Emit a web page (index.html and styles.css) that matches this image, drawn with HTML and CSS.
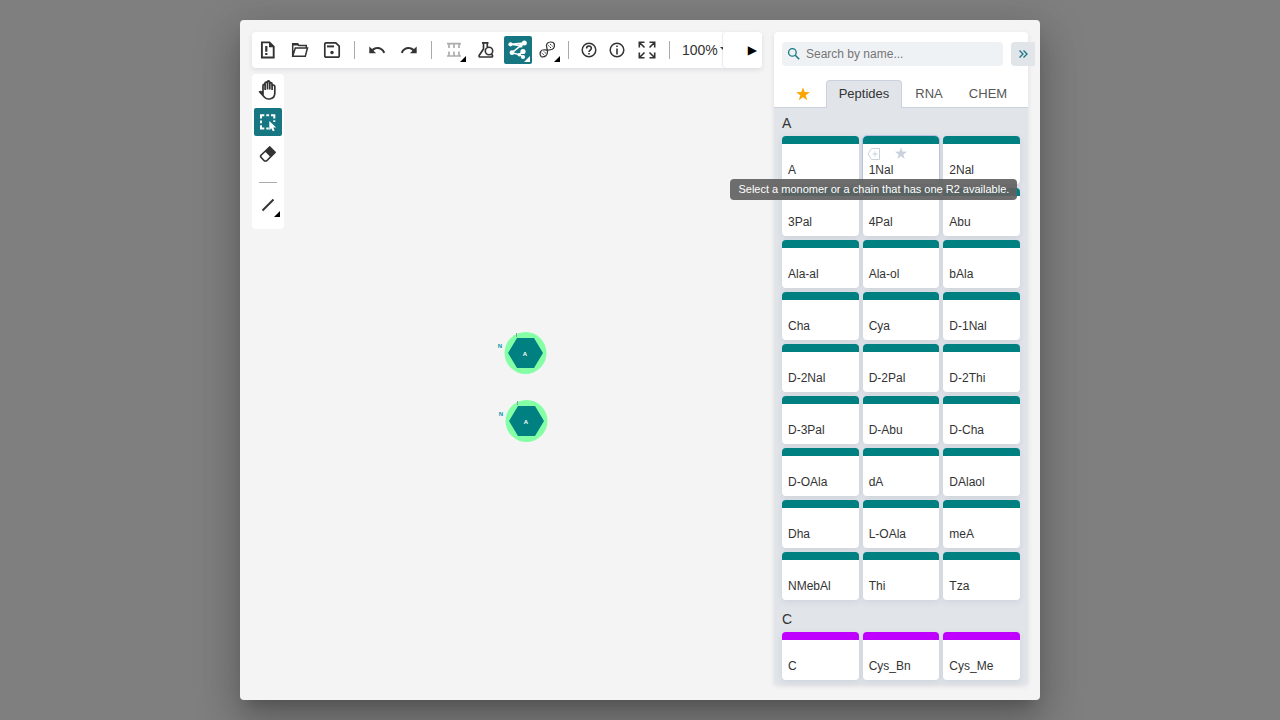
FILE: index.html
```html
<!DOCTYPE html>
<html lang="en">
<head>
<meta charset="utf-8">
<title>Macromolecules editor</title>
<link rel="stylesheet" href="styles.css">
</head>
<body>
<main class="dialog">
  <section class="editor">
    <div class="topbar">
      <div class="topbar-tools">
        <div class="group">
          <button class="tool" aria-label="Clear canvas"><svg viewBox="0 0 20 20"><path d="M3.9 2.400h7.600l4.200 4.200v10.900H3.900z" fill="none" stroke="currentColor" stroke-width="1.900"/><path d="M11 2v5.300h5.200zM7.200 6h2.200v5.800H7.200zM7.200 13h2.200v2.100H7.200z" fill="currentColor"/></svg></button>
          <button class="tool" aria-label="Open"><svg viewBox="0 0 20 20"><path d="M2.7 16V3.700h4.800L9 5.500h7.300v2.300M2.700 16.300 5.300 8h12.200l-2.200 8.300z" fill="none" stroke="currentColor" stroke-width="1.500"/><path d="M2 3h5.800l1.500 2.500H2z" fill="currentColor"/></svg></button>
          <button class="tool" aria-label="Save"><svg viewBox="0 0 20 20"><path d="M4 2.800h9.800l3.400 3.400V16a1.200 1.200 0 0 1-1.200 1.200H4A1.200 1.200 0 0 1 2.800 16V4A1.200 1.200 0 0 1 4 2.800z" fill="none" stroke="currentColor" stroke-width="1.700"/><path d="M5 5.400h7v2H5z" fill="currentColor"/><circle cx="10" cy="12.500" r="1.700" fill="currentColor"/></svg></button>
        </div>
        <span class="divider"></span>
        <div class="group">
          <button class="tool" aria-label="Undo"><svg viewBox="0 0 20 20"><path d="M2.300 6.500v6.800h6.800l-2.600-2.600c2.500-2.500 8-2.300 9.800 2.600l1.900-.7C16 6.500 9 5.500 5 9.100z" fill="currentColor"/></svg></button>
          <button class="tool" aria-label="Redo"><svg viewBox="0 0 20 20"><path d="M17.700 6.500v6.800h-6.800l2.600-2.600c-2.500-2.500-8-2.300-9.800 2.600l-1.900-.7C4 6.500 11 5.500 15 9.100z" fill="currentColor"/></svg></button>
        </div>
        <span class="divider"></span>
        <div class="group">
          <button class="tool disabled" aria-label="Create antisense strand" disabled><svg viewBox="0 0 20 20"><path d="M3 3.600h14M5 3.600v4.400M10 3.600v4.400M15 3.600v4.400M3 16h14M5 16v-4.400M10 16v-4.400M15 16v-4.400" fill="none" stroke="currentColor" stroke-width="1.700"/></svg><span class="corner"></span></button>
          <button class="tool" aria-label="Calculate properties"><svg viewBox="0 0 20 20"><path d="M6 2.800h6.500M7.500 3v6L3.300 15.200q-.8 1.800 1 1.800h11q1.800 0 1-1.800l-1-1.500M11.300 3v4" fill="none" stroke="currentColor" stroke-width="1.700"/><circle cx="13" cy="11" r="3.700" fill="#fff" stroke="currentColor" stroke-width="1.600"/></svg></button>
          <button class="tool active" aria-label="Flex layout mode"><svg viewBox="0 0 20 20"><path d="M2.500 4.300 16.300 3l-3.600 2.700zM12.700 5.700 4 12.700l7.300 2 3.700-3M11.300 14.700l4 2.300" fill="none" stroke="currentColor" stroke-width="1.500"/><circle cx="2.500" cy="4.300" r="2.100" fill="currentColor"/><circle cx="16.300" cy="3" r="2.500" fill="currentColor"/><circle cx="12.700" cy="5.700" r="1.900" fill="currentColor"/><circle cx="4" cy="12.700" r="2.400" fill="currentColor"/><circle cx="15" cy="11.500" r="2.600" fill="currentColor"/><circle cx="11.300" cy="14.700" r="1.700" fill="currentColor"/><circle cx="15" cy="17" r="2.100" fill="currentColor"/></svg><span class="corner"></span></button>
        </div>
        <button class="tool mode" aria-label="Switch to sequence"><svg viewBox="0 0 20 20"><path d="M3.200 16.800C.5 12.500 3 9.300 7 9.800c4.500.6 8 .7 9.200-2.700.6-2 0-3.800-1-4.600" fill="none" stroke="currentColor" stroke-width="1.200"/><path d="M3.200 16.800c4 .8 6.500-1.800 6.300-5.600C9 7 7.300 5 9.300 3.200c1.700-1.500 4.700-1.300 5.900-.7" fill="none" stroke="currentColor" stroke-width="1.200"/><path d="m3.600 12.800 3 2.700M5.500 11.200l2.800 2.500M10.300 5.500l3 2.700M12 4l2.600 2.300" stroke="currentColor" stroke-width="1" stroke-dasharray="1.500 .7"/></svg><span class="corner"></span></button>
        <span class="divider tight"></span>
        <div class="help">
          <button class="tool" aria-label="Help"><svg viewBox="0 0 20 20"><circle cx="10" cy="10" r="6.800" fill="none" stroke="currentColor" stroke-width="1.500"/><path d="M7.600 8.500C7.600 5.300 12.400 5.300 12.400 8.300c0 1.700-2.400 1.800-2.400 3.600M10 13v1.500" fill="none" stroke="currentColor" stroke-width="1.600"/></svg></button>
          <button class="tool" aria-label="About"><svg viewBox="0 0 20 20"><circle cx="10" cy="10" r="6.800" fill="none" stroke="currentColor" stroke-width="1.500"/><path d="M10 5.500V7M10 8.500v6" stroke="currentColor" stroke-width="1.600"/></svg></button>
        </div>
        <button class="tool mode" aria-label="Fullscreen"><svg viewBox="0 0 20 20"><path d="M2.300 7.500V2.300h5.200M12.500 2.300h5.200v5.200M17.700 12.500v5.200h-5.200M7.500 17.700H2.300v-5.200M2.500 2.500l5 5M17.500 2.500l-5 5M17.500 17.500l-5-5M2.500 17.500l5-5" fill="none" stroke="currentColor" stroke-width="1.600"/></svg></button>
        <span class="divider"></span>
        <button class="zoom">100%<span class="zoom-arrow"></span></button>
      </div>
      <button class="scroll-right" aria-label="Scroll right">▶</button>
    </div>
    <div class="workspace">
      <div class="sidebar">
        <button class="tool" aria-label="Hand"><svg viewBox="0 0 20 20"><path d="M1.700 11.800c1-.9 2 .1 3.300 1.500V5.500c0-1.500 2-1.500 2 0V3.300c0-1.500 2.300-1.500 2.300 0V2c0-1.400 2.300-1.400 2.300 0v1.800c0-1.500 2.400-1.500 2.400 0v2c.3-1.200 2.800-1 2.800.5V13c0 7-7.800 7-10.300 4.200z" fill="none" stroke="currentColor" stroke-width="1.700"/><path d="M7.100 4v6M9.500 2v7.500M11.800 2.500v7M14.100 5v5" stroke="currentColor" stroke-width="1.700"/></svg></button>
        <button class="tool active" aria-label="Select rectangle"><svg viewBox="0 0 20 20"><path d="M3 6.500V3.200h3.300M8.300 3.200h2.800M13 3.200h3.300v3.300M3 8.500v2.800M3 13.200v3.300h3.300M8.300 16.500h2.500M16.300 8.300V10" fill="none" stroke="currentColor" stroke-width="2"/><path d="M11.300 9v9.200l2-1.900 1.500 3 1.900-.9-1.400-2.900h2.800z" fill="currentColor"/></svg></button>
        <button class="tool" aria-label="Erase"><svg viewBox="0 0 20 20"><path d="M11.700 3 17 8.300 8.500 17h-2L2.700 13v-1.500z" fill="none" stroke="currentColor" stroke-width="1.700" stroke-linejoin="round"/><path d="m11.700 2.300 6 6-5 5-6-6z" fill="currentColor"/></svg></button>
        <hr class="rule">
        <button class="tool" aria-label="Single bond"><svg viewBox="0 0 20 20"><path d="M4.500 15.500 15.500 4.500" stroke="currentColor" stroke-width="1.900"/></svg><span class="corner"></span></button>
      </div>
      <svg class="canvas" viewBox="284 74 478 610" role="img" aria-label="Canvas">
        <circle cx="525.500" cy="353" r="21" fill="#85ffa5"/>
        <path d="M508 353l9-15h17l9 15-9 15h-17z" fill="#008080"/>
        <path d="M516.500 333v4M517.500 401v4" stroke="#84a49c"/>
        <text class="letter" x="525" y="356">A</text><text class="terminal" x="500" y="348">N</text>
        <circle cx="526.500" cy="421" r="21" fill="#85ffa5"/>
        <path d="M509 421l9-15h17l9 15-9 15h-17z" fill="#008080"/>
        <path d="M516.500 333v4M517.500 401v4" stroke="#84a49c"/>
        <text class="letter" x="526" y="424">A</text><text class="terminal" x="501" y="416">N</text>
      </svg>
    </div>
  </section>
  <aside class="library">
    <div class="search-row">
      <label class="search"><svg viewBox="0 0 16 16"><circle cx="6.400" cy="6.400" r="3.800" fill="none" stroke="currentColor" stroke-width="1.300"/><path d="m9.200 9.200 4 4" stroke="currentColor" stroke-width="1.500"/></svg><input type="text" placeholder="Search by name..." aria-label="Search by name"></label>
      <button class="hide" aria-label="Hide library"><svg viewBox="0 0 16 16"><path d="m4.500 4.500 3.500 3.500-3.500 3.500M8.500 4.500 12 8l-3.500 3.500" fill="none" stroke="currentColor" stroke-width="1.300"/></svg></button>
    </div>
    <div class="tabs" role="tablist">
      <button class="tab fav" role="tab" aria-label="Favorites"><svg viewBox="0 0 16 16"><path d="m8 1.200 1.700 4.900 5.200.1-4.200 3.100 1.500 5L8 11.300l-4.200 3 1.500-5L1.100 6.200l5.200-.1z" fill="#faa500"/></svg></button>
      <button class="tab selected" role="tab" aria-selected="true">Peptides</button>
      <button class="tab rna" role="tab">RNA</button>
      <button class="tab chem" role="tab">CHEM</button>
    </div>
    <div class="list">
      <section><h2>A</h2><div class="cards">
        <div class="card">A</div>
        <div class="card hovered"><span class="card-actions"><svg viewBox="0 0 14 14"><path d="M4.500 1.500h8v11h-8L1 7z" fill="none" stroke="currentColor"/><path d="M8 4.500v5M5.500 7h5" stroke="currentColor"/></svg><svg viewBox="0 0 14 14"><path d="m7 .3 1.500 4.300 4.600.1-3.700 2.800 1.300 4.400L7 9.300l-3.700 2.600 1.300-4.400L.9 4.700l4.600-.1z" fill="currentColor"/></svg></span>1Nal<span class="tooltip" role="tooltip">Select a monomer or a chain that has one R2 available.</span></div>
        <div class="card">2Nal</div>
        <div class="card">3Pal</div><div class="card">4Pal</div><div class="card">Abu</div>
        <div class="card">Ala-al</div><div class="card">Ala-ol</div><div class="card">bAla</div>
        <div class="card">Cha</div><div class="card">Cya</div><div class="card">D-1Nal</div>
        <div class="card">D-2Nal</div><div class="card">D-2Pal</div><div class="card">D-2Thi</div>
        <div class="card">D-3Pal</div><div class="card">D-Abu</div><div class="card">D-Cha</div>
        <div class="card">D-OAla</div><div class="card">dA</div><div class="card">DAlaol</div>
        <div class="card">Dha</div><div class="card">L-OAla</div><div class="card">meA</div>
        <div class="card">NMebAl</div><div class="card">Thi</div><div class="card">Tza</div>
      </div></section>
      <section><h2>C</h2><div class="cards cysteine">
        <div class="card">C</div><div class="card">Cys_Bn</div><div class="card">Cys_Me</div>
      </div></section>
    </div>
  </aside>
</main>
</body>
</html>
```
FILE: styles.css
```css
* { box-sizing: border-box; }
body {
  margin: 0;
  min-height: 100vh;
  padding: 20px;
  display: flex;
  justify-content: center;
  background: #7f7f7f;
  color: #333;
  font-family: "Liberation Sans", Arial, sans-serif;
  font-size: 12px;
}
button { border: 0; padding: 0; background: none; color: inherit; font: inherit; }
.dialog {
  flex: 1;
  max-width: 800px;
  display: flex;
  gap: 12px;
  padding: 12px 12px 16px;
  border-radius: 4px;
  background: #f4f4f4;
  box-shadow: 0 11px 15px -7px rgba(0,0,0,.2), 0 24px 38px 3px rgba(0,0,0,.14), 0 9px 46px 8px rgba(0,0,0,.12);
}
.editor { flex: 1; min-width: 0; display: flex; flex-direction: column; gap: 6px; }
.topbar {
  display: flex;
  height: 36px;
  border-radius: 4px;
  background: #fff;
  box-shadow: 0 2px 5px rgba(103,104,132,.15);
}
.topbar-tools { flex: 1; min-width: 0; display: flex; align-items: center; padding-left: 2px; overflow: hidden; }
.group { display: flex; gap: 4px; }
.help { display: flex; }
.tool {
  position: relative;
  flex: none;
  width: 28px;
  height: 28px;
  display: flex;
  align-items: center;
  justify-content: center;
  border-radius: 4px;
}
.tool svg { width: 20px; height: 20px; }
.tool.active { background: #167782; color: #fff; border-radius: 2px; }
.tool.disabled svg { opacity: .4; }
.mode { margin-left: 2px; }
.corner {
  position: absolute;
  right: 2px;
  bottom: 2px;
  width: 6px;
  height: 6px;
  background: #000;
  clip-path: polygon(100% 0, 100% 100%, 0 100%);
}
.active .corner { background: #fff; }
.divider { flex: none; width: 1px; height: 18px; margin: 0 8px; background: #aaa; }
.divider.tight { margin: 0 6px; }
.zoom { flex: none; display: flex; align-items: center; gap: 2px; padding-left: 4px; font-size: 14px; }
.zoom-arrow { border: 3px solid transparent; border-top-color: #333; }
.scroll-right {
  width: 39px;
  padding: 0 5px 0 0;
  border-radius: 4px;
  background: #fff;
  box-shadow: -1px 0 1px rgba(103,104,132,.15);
  color: #000;
  font-family: "DejaVu Sans", sans-serif;
  text-align: right;
}
.workspace { flex: 1; display: flex; align-items: flex-start; }
.sidebar {
  width: 32px;
  display: flex;
  flex-direction: column;
  align-items: center;
  gap: 4px;
  padding: 2px 0 10px;
  border-radius: 4px;
  background: #fff;
}
.rule { width: 18px; height: 1px; margin: 10px 0 4px; border: 0; background: #aaa; }
.canvas { flex: 1; min-width: 0; align-self: stretch; }
.letter, .terminal { font-size: 6px; font-weight: bold; text-anchor: middle; }
.letter { fill: #fff; }
.terminal { fill: #0097a8; }
.library {
  flex: none;
  width: 254px;
  display: flex;
  flex-direction: column;
  border-radius: 4px;
  background: #fff;
  box-shadow: 0 2px 5px rgba(103,104,132,.15);
}
.search-row { display: flex; gap: 8px; margin: 10px -7px 14px 8px; }
.search {
  flex: 1;
  min-width: 0;
  display: flex;
  align-items: center;
  gap: 4px;
  height: 24px;
  padding: 0 4px;
  border-radius: 4px;
  background: #eff2f5;
  color: #167782;
}
.search svg, .hide svg { width: 16px; height: 16px; }
.search input { flex: 1; min-width: 0; border: 0; padding: 0; background: none; font: inherit; color: #333; }
.search input::placeholder { color: #757575; }
.hide {
  width: 24px;
  height: 24px;
  display: flex;
  align-items: center;
  justify-content: center;
  border-radius: 4px 0 0 4px;
  background: #e1e5ea;
  color: #167782;
}
.tabs { display: flex; height: 28px; padding: 0 2px 0 6px; border-bottom: 1px solid #cad3dd; }
.tab { height: 27px; color: #585858; font-size: 13px; }
.fav { width: 46px; display: flex; align-items: center; justify-content: center; }
.fav svg { width: 16px; height: 16px; }
.selected {
  width: 76px;
  height: 28px;
  padding-bottom: 2px;
  border: 1px solid #cad3dd;
  border-bottom: 0;
  border-radius: 4px 4px 0 0;
  background: #e1e5ea;
  color: #333;
}
.rna { width: 54px; }
.chem { width: 64px; }
.list { flex: 1; padding: 0 8px 4px; background: #e1e5ea; }
h2 { margin: 0; height: 28px; line-height: 30px; font-size: 14px; font-weight: normal; }
section + section { margin-top: 4px; }
.cards { display: grid; grid-template-columns: repeat(3, 1fr); gap: 4px; }
.card {
  position: relative;
  height: 48px;
  padding: 18px 6px 0;
  border-top: 8px solid #008080;
  border-radius: 4px;
  background: #fff;
  box-shadow: 0 2px 6px rgba(103,104,132,.15);
  line-height: 16px;
}
.cysteine .card { border-top-color: #bf00ff; }
.hovered { z-index: 1; outline: 1px solid #b6c1e0; }
.card-actions { position: absolute; top: 3px; left: 4px; display: flex; gap: 13px; color: #cad3dd; }
.card-actions svg { width: 14px; height: 14px; }
.tooltip {
  position: absolute;
  top: 35px;
  right: -78px;
  padding: 2px 8px 3px;
  border-radius: 4px;
  background: rgba(97,97,97,.92);
  color: #fff;
  font-size: 11px;
  white-space: nowrap;
}
```
